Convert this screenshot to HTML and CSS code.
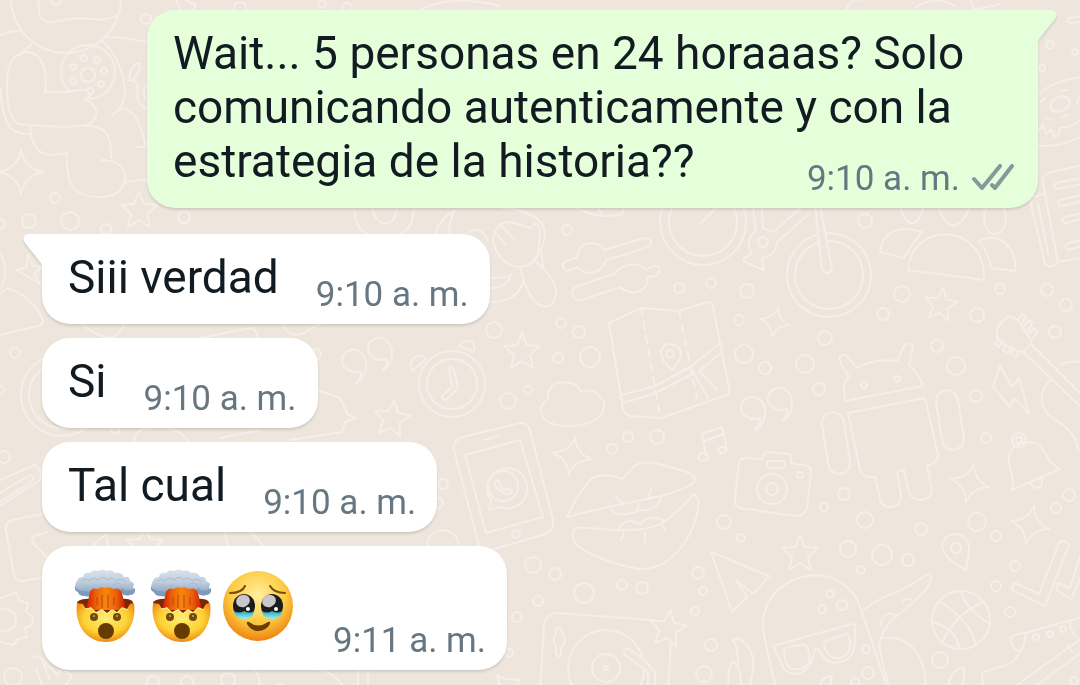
FILE: index.html
```html
<!DOCTYPE html>
<html lang="es">
<head>
  <meta charset="UTF-8">
  <meta name="viewport" content="width=device-width, initial-scale=1.0">
  <title>Chat</title>
  <link rel="stylesheet" href="styles.css">
</head>
<body>
  <!-- Doodle wallpaper -->
  <svg class="wallpaper" viewBox="0 0 1080 685" preserveAspectRatio="xMinYMin slice" aria-hidden="true">
    <defs>
      <path id="star" d="M0 -18 L5 -6 L18 -5 L8 4 L11 17 L0 10 L-11 17 L-8 4 L-18 -5 L-5 -6 Z"/>
      <path id="spark" d="M0 -22 Q3 -4 22 0 Q3 4 0 22 Q-3 4 -22 0 Q-3 -4 0 -22 Z"/>
      <path id="quote" d="M3 20 Q9 14 8 8 C-2 12 -12 4 -11 -3 C-10 -12 0 -16 7 -11 C17 -3 14 14 3 20 Z"/>
    </defs>

    <!-- monkey with a disc -->
    <circle cx="66" cy="-2" r="55"/>
    <circle cx="56" cy="0" r="5"/>
    <path d="M39 0 C37 17 42 23 53 22 C70 18 80 17 92 19 C105 21 118 17 120 12 M0 35 Q10 31 20 31 M106 37 Q125 37 150 43"/>
    <circle cx="88" cy="72" r="27"/>
    <circle cx="88" cy="75" r="7"/>
    <circle cx="84" cy="58" r="3"/><circle cx="97" cy="60" r="3"/><circle cx="104" cy="71" r="3"/><circle cx="101" cy="84" r="3"/>
    <circle cx="73" cy="67" r="3"/><circle cx="73" cy="81" r="3"/><circle cx="90" cy="91" r="3"/>
    <path class="filled" d="M45 92 C48 70 42 52 26 52 C12 54 7 65 7 85 C7 105 10 122 20 124 C40 126 60 128 80 126 C96 126 100 112 93 105 Q90 101 84 100 L90 96 Q88 88 80 90 L66 92 Z"/>
    <path d="M32 44 L20 55 M0 88 C2 105 3 115 8 124 C12 132 22 134 30 134 M101 40 C120 55 127 85 124 98 C122 108 118 110 113 115 Q120 106 128 110 C138 116 142 130 146 147 H138"/>
    <path d="M30 126 C31 145 38 155 52 155 L67 153 C66 170 68 185 78 192 C92 200 122 200 125 180 C126 165 115 160 101 160 M85 126 C105 125 112 135 111 158 M125 182 L150 179"/>
    <path d="M130 80 Q128 66 140 63 Q140 72 133 80 Z M128 80 Q138 78 138 92 Q134 102 148 110 M150 82 Q140 88 146 100"/>
    <path d="M176 0 L180 8 L176 16 L186 11 M186 0 L196 5 L192 12"/>
    <circle cx="240" cy="8" r="6"/>
    <path d="M420 10 Q450 -6 500 6 M846 10 Q852 -4 862 0 M915 8 Q935 -6 955 6 M970 0 L974 10 L1000 4"/>

    <!-- donut and notebook on the right edge -->
    <path d="M1038 94 Q1056 80 1082 77 M1038 146 Q1062 147 1082 136 M1038 132 L1043 124 L1046 134 L1051 129 L1055 137 Q1060 136 1060 127 Q1070 130 1082 118"/>
    <ellipse cx="1060" cy="104" rx="10" ry="7" transform="rotate(-25 1060 104)"/>
    <path d="M1061 90 h6 M1041 102 l4 -4 M1062 117 l6 -2 M1047 119 l3 1 M1078 104 q-2 -4 2 -6"/>
    <path d="M1082 165 L1049 173 Q1041 176 1043 184 L1058 262 Q1052 270 1045 264 L1030 200 Q1030 197 1044 194 M1038 204 L1048 253 M1058 262 L1082 258 M1082 178 L1056 183 Q1052 187 1057 189 L1082 184 M1082 195 L1060 200 Q1055 204 1062 206 L1082 201 M1082 213 L1065 217 Q1059 221 1066 223 L1082 219 M1082 240 L1068 243 Q1062 247 1069 250 L1082 246"/>
    <path d="M1082 16 L1069 18 Q1065 21 1070 23 L1082 22"/>

    <!-- left edge -->
    <use href="#spark" x="21" y="172"/>
    <use href="#star" x="139" y="210"/>
    <path d="M0 252 Q6 262 5 275 Q4 284 0 288 M16 270 L26 267 L28 255 L33 266 L42 267 L34 274 L40 284 L30 278 Z M0 294 L7 288 C28 294 40 312 43 320 Q44 324 38 326 L0 335"/>
    <circle cx="62" cy="395" r="41"/><circle cx="62" cy="395" r="33"/>
    <path d="M80 322 Q95 337 112 338 Q120 335 125 322 M200 338 L250 328 Q257 328 258 340 M280 320 Q288 340 305 333 Q318 320 340 322"/>
    <path d="M134 442 Q134 430 148 428 Q180 424 190 445 M220 438 L260 430 M318 390 L340 398 L348 415 L356 418 L345 422 L342 432 L290 440"/>
    <path d="M0 480 L34 465 Q44 470 40 480 L0 506 M0 493 L30 475 Q36 478 30 483 L0 502"/>
    <path d="M42 514 L12 520 Q5 522 6 530 L14 575 Q17 583 24 581 L44 577 M48 532 L34 536 Q31 538 33 543 L50 560 M90 548 L106 534 L108 548 M225 532 L228 548 M250 532 Q260 540 264 548"/>
    <use href="#star" x="145" y="545"/>
    <path d="M0 598 L10 595 L16 592 L20 601 L28 603 L26 612 L33 616 L32 625 L25 628 L27 637 L18 639 L13 645 L0 642"/>
    <circle cx="5" cy="620" r="11"/>
    <path d="M34 658 Q38 653 42 660 L50 680 M42 660 L58 675 L62 668 L72 676 L66 685 M36 668 L42 685"/>
    <path d="M255 671 Q262 678 258 690 M268 690 Q280 679 292 690 M320 670 Q335 672 345 690 M358 670 V690 M368 670 V690"/>
    <path d="M500 685 L497 675 L505 679 L520 680 L514 690"/>

    <!-- hidden behind the first messages -->
    <path d="M355 212 Q356 232 372 236 Q400 244 412 222 L414 208 M372 208 Q376 224 386 223 Q396 222 397 208"/>
    <path d="M434 236 Q440 218 455 210 M455 210 Q447 225 450 236 M500 208 Q518 208 530 215 Q548 222 544 240 L541 250 L543 266 M470 232 Q480 225 488 240"/>
    <path d="M493 240 Q496 222 510 222 L530 228 L536 223 L540 228 L538 255 Q530 270 512 266 Q496 258 493 240 Z M500 224 L515 240 M494 231 L505 244 M520 268 C524 285 532 303 542 306 Q556 308 556 290 C554 276 540 266 534 260 M524 278 Q520 302 490 302 M490 278 Q508 278 511 274 Q508 288 490 288"/>
    <path d="M577 208 Q600 220 622 214 L624 208 M598 208 L602 215"/>

    <!-- spoons -->
    <path d="M604 250 L644 238 Q652 238 651 244 Q650 248 606 260 Q602 272 590 273 Q580 272 578 267 L568 271 Q562 270 563 264 Q565 260 577 258 Q578 244 590 243 Q600 243 604 250 Z"/>
    <path d="M616 273 L576 287 Q570 290 573 297 Q576 301 582 300 L620 287 Q630 296 642 290 Q648 285 648 277 L656 276 Q661 273 659 267 Q654 264 646 270 Q640 263 628 265 Q618 268 616 273 Z"/>

    <!-- bicycle -->
    <circle cx="703" cy="222" r="43"/><circle cx="703" cy="222" r="34"/>
    <circle cx="829" cy="275" r="42"/><circle cx="829" cy="275" r="34"/>
    <path class="filled" d="M815 205 L822 268 Q827 278 832 269 L820 205"/>
    <path d="M700 224 L718 206 M753 208 L756 230 Q744 242 752 254 L744 258 Q742 262 750 264 L764 270 L762 258 Q776 256 777 242 L808 215 M762 208 L763 228 L774 232 L800 208"/>
    <circle cx="763" cy="242" r="5"/>

    <!-- paw flower -->
    <path d="M880 252 C883 230 900 225 922 232 Q912 245 904 258 Z M908 270 C912 220 986 222 984 280 Z M979 241 C1000 230 1018 250 1015 271 L991 268 Q990 255 979 241 Z"/>
    <path d="M901 208 Q904 222 912 223 Q920 222 923 208 M939 208 Q944 224 953 226 Q965 222 969 208"/>
    <ellipse cx="995" cy="218" rx="11" ry="16"/>

    <!-- quotes, alarm clock, cloud -->
    <use href="#quote" x="353" y="363"/>
    <use href="#quote" x="379" y="351"/>
    <use href="#quote" x="752" y="410"/>
    <use href="#quote" x="779" y="401"/>
    <circle cx="452" cy="384" r="33"/><circle cx="452" cy="384" r="25"/>
    <path d="M449 368 Q452 366 454 370 L458 388 L446 400 Q442 400 442 396 L452 387 Z M412 371 Q408 360 417 356 Q424 355 426 359 Z M459 346 Q464 339 472 342 Q476 345 474 352 Z"/>
    <use href="#star" x="522" y="351"/>
    <use href="#star" x="392" y="418" transform="rotate(8 392 418)"/>
    <path d="M549 398 C545 390 550 393 551 388 Q556 380 570 383 Q578 384 581 392 Q592 388 598 395 C610 404 603 420 585 424 Q560 430 545 420 Q535 408 549 398 Z"/>

    <!-- folded map -->
    <path d="M609 323 L641 308 L679 311 L707 302 Q712 302 713 307 L729 388 Q731 394 724 396 L661 418 L630 416 Q624 414 623 409 Z M622 395 L655 386 L690 367 L722 342 M623 403 L656 393 L692 374 M690 367 L708 398 M699 371 L717 390 M699 371 L722 352"/>
    <path stroke-dasharray="8 6" d="M641 308 L660 416 M679 311 L697 398"/>
    <path d="M672 370 Q660 360 661 351 Q664 343 671 344 Q681 346 681 355 Q679 362 672 370 Z"/>
    <circle cx="670" cy="354" r="4"/>
    <use href="#spark" transform="translate(775 322) rotate(12) scale(.7)"/>

    <!-- phone -->
    <path d="M480 550 L454 450 Q452 441 462 437 L520 423 Q527 422 530 430 L553 520 Q554 530 546 534 L494 549 M484 440 L498 436"/>
    <path d="M465 455 L520 440 L543 517 L486 533 Z"/>
    <circle cx="516" cy="534" r="4"/>
    <path d="M489 510 L491 500 A20 20 0 1 1 500 507 Z"/>
    <circle cx="503" cy="486" r="15"/>
    <path d="M495 482 Q498 478 500 484 Q500 488 506 490 Q512 488 512 492 Q506 497 500 490 Q494 487 495 482 Z"/>
    <use href="#spark" transform="translate(572 456) rotate(10) scale(.9)"/>

    <!-- note, lips -->
    <path d="M706 455 L702 434 L722 427 L727 449 M704 441 L723 434"/>
    <ellipse cx="703" cy="457" rx="5" ry="4"/><ellipse cx="722" cy="450" rx="4" ry="3"/>
    <path d="M567 517 C575 500 585 485 592 478 Q605 472 622 479 Q628 474 634 466 Q644 460 660 464 L690 473 Q698 478 692 484 C672 498 620 502 567 517 Z"/>
    <path d="M577 528 C585 525 640 538 664 522 Q680 510 694 494 Q700 498 698 510 C692 540 670 570 640 569 C615 565 590 556 577 545 Q568 534 577 528 Z"/>
    <path d="M611 508 Q614 518 636 512 L639 504 M639 510 Q656 512 661 498 M618 530 Q625 516 640 524 Q652 512 665 522 M615 496 L624 504 M651 489 L648 499 M624 532 L621 541 M645 532 V542 M661 523 L666 532"/>
    <path d="M427 546 Q428 531 443 530 Q458 532 459 546"/>

    <!-- turntable -->
    <path d="M540 690 L544 625 Q546 614 556 613 L652 620 M671 642 L668 690"/>
    <circle cx="606" cy="668" r="38"/><circle cx="606" cy="668" r="14"/><circle cx="606" cy="668" r="2"/>
    <path d="M556 632 Q559 622 562 632 L565 640 Q563 646 561 648 V655 Q558 658 556 654 V647 Q552 642 556 632 Z"/>
    <path class="filled" d="M625 655 Q622 648 629 649 L644 660 L655 672 V690 H648 V672 Z"/>
    <use class="filled" href="#star" x="668" y="628" transform="rotate(8 668 628)"/>
    <path d="M711 552 L769 576 L753 594 L736 580 L747 597 L732 612 Z"/>

    <!-- camera -->
    <path d="M739 462 Q740 458 746 458 L762 459 Q763 452 769 452 L788 454 Q792 455 791 463 L807 466 Q812 467 811 473 L807 508 Q804 516 796 516 L740 508 Q734 506 735 499 Z"/>
    <circle cx="772" cy="489" r="15"/><circle cx="772" cy="489" r="6"/><circle cx="800" cy="475" r="3"/>
    <rect x="767" y="461" width="18" height="7" rx="3"/>

    <!-- robot -->
    <path d="M845 401 C843 385 844 382 849 376 Q838 362 840 356 Q846 352 850 360 L857 368 Q875 358 897 361 L904 346 Q910 340 913 347 L909 365 Q920 375 923 386 Z"/>
    <circle cx="864" cy="385" r="3"/><circle cx="897" cy="379" r="3"/>
    <path d="M848 413 L925 398 L938 455 Q938 463 927 466 L932 490 Q931 500 920 500 Q911 500 908 490 L904 470 L897 472 L901 495 Q902 506 890 507 Q880 506 880 498 L875 477 Q862 478 860 470 Z"/>
    <rect x="825" y="412" width="22" height="62" rx="11" transform="rotate(-9 836 443)"/>
    <rect x="939" y="390" width="22" height="60" rx="11" transform="rotate(-9 950 420)"/>
    <use href="#star" transform="translate(941 304) rotate(8) scale(.9)"/>

    <!-- guitar, lightning, bell -->
    <path d="M997 330 Q999 322 1010 316 L1018 320 L1032 342 L1024 352 Q1008 350 997 338 Z M1032 345 L1082 395 M1023 352 L1082 408 M1060 365 Q1070 360 1082 362 M1051 380 C1038 390 1038 410 1055 420 Q1075 430 1078 450"/>
    <path d="M1018 320 l4 -6 l4 3 l-4 6 M1024 326 l5 -6 l4 3 l-5 7 M1029 333 l5 -5 l4 3 l-5 7 M999 338 l-4 6 l4 3 l4 -6 M1006 344 l-3 6 l5 3 l3 -6 M1013 348 l-2 6 l5 3 l3 -6"/>
    <path d="M1000 366 L993 387 L1010 407 L1014 398 L1029 414 L1019 378 L1012 387 Z"/>
    <circle cx="1019" cy="440" r="7"/><circle cx="1019" cy="440" r="3"/>
    <path d="M1012 490 C1016 475 1004 462 1011 450 Q1020 440 1036 443 C1048 450 1045 462 1060 469 Z M1031 484 Q1038 492 1042 484 L1042 477"/>
    <use href="#spark" transform="translate(970 483) rotate(12) scale(.9)"/>
    <use href="#spark" transform="translate(1030 525) rotate(12) scale(.9)"/>
    <use href="#star" x="800" y="553"/>
    <path d="M966 570 C955 565 942 555 942 546 Q944 534 956 534 Q970 536 969 552 Z"/>
    <circle cx="956" cy="548" r="5"/>

    <!-- face with glasses, bird, ball -->
    <path d="M776 690 C768 650 758 625 766 608 C780 570 842 560 860 606 L888 690"/>
    <path d="M773 646 L852 624 Q857 624 855 632 Q856 655 846 660 Q828 668 820 652 Q816 645 814 652 Q812 670 797 674 Q784 674 780 660 Z M784 650 Q786 646 806 645 Q812 655 808 664 Q800 672 790 668 Q784 662 784 650 Z M824 642 L846 634 Q852 636 849 652 Q840 662 830 656 Q824 650 824 642 Z"/>
    <path d="M863 610 C880 595 905 592 923 577 Q931 571 931 578 C930 592 905 608 890 622 Q878 636 880 650 Q884 670 890 690 M882 638 C910 634 926 655 926 690 M881 625 Q880 616 890 613 L896 615 M902 603 Q904 597 911 600"/>
    <circle cx="961" cy="620" r="29"/>
    <path d="M940 602 Q970 620 976 645 M982 602 Q955 615 943 641 M961 591 Q966 610 990 624 M932 622 Q955 628 959 647"/>
    <path d="M732 642 Q734 636 742 640 C756 652 756 668 748 690 M734 640 Q738 650 738 662 M728 690 Q728 660 734 662 Q742 668 741 690 M820 685 Q822 676 832 676 L830 685 M947 690 Q950 670 964 667 Q966 680 960 690"/>

    <!-- double tick and shoe -->
    <path d="M1015 583 L1039 594 L1059 543 Q1064 538 1069 545 L1045 606 L1012 590 Q1012 584 1015 583 Z M1082 550 L1070 588 L1058 583 L1056 590 L1071 599 L1082 575"/>
    <path d="M1082 617 L1025 633 Q1010 634 1010 640 Q1012 648 1020 652 Q1014 664 1000 667 L984 672 Q980 674 984 690 M1025 633 Q1026 645 1020 652 M1082 638 L1010 690 M1082 652 L1030 690 M1070 622 Q1070 632 1077 637 M1067 645 L1072 652"/>
    <circle cx="1036" cy="637" r="3"/><circle cx="1050" cy="634" r="3"/><circle cx="1063" cy="629" r="3"/>

    <!-- loose bubbles -->
    <circle cx="55" cy="198" r="5"/><circle cx="29" cy="221" r="7"/><circle cx="70" cy="221" r="9"/><circle cx="106" cy="229" r="5"/>
    <circle cx="146" cy="19" r="5"/><circle cx="184" cy="217" r="6"/><circle cx="322" cy="4" r="4"/><circle cx="347" cy="8" r="5"/>
    <circle cx="0" cy="224" r="5"/><circle cx="15" cy="353" r="5"/><circle cx="0" cy="390" r="4"/><circle cx="4" cy="457" r="6"/><circle cx="115" cy="430" r="4"/>
    <circle cx="1050" cy="45" r="4"/><circle cx="1075" cy="52" r="3"/><circle cx="1042" cy="68" r="3"/><circle cx="865" cy="221" r="7"/>
    <circle cx="567" cy="230" r="5"/><circle cx="679" cy="288" r="5"/><circle cx="494" cy="330" r="8"/><circle cx="561" cy="323" r="5"/>
    <circle cx="579" cy="332" r="6"/><circle cx="558" cy="358" r="5"/><circle cx="590" cy="357" r="10"/><circle cx="508" cy="401" r="8"/>
    <circle cx="528" cy="390" r="4"/><circle cx="628" cy="437" r="5"/><circle cx="657" cy="437" r="7"/><circle cx="612" cy="449" r="5"/>
    <circle cx="711" cy="283" r="5"/><circle cx="747" cy="291" r="7"/><circle cx="739" cy="320" r="5"/><circle cx="744" cy="354" r="9"/>
    <circle cx="765" cy="368" r="6"/><circle cx="825" cy="338" r="7"/><circle cx="805" cy="364" r="9"/><circle cx="819" cy="389" r="6"/>
    <circle cx="883" cy="314" r="6"/><circle cx="902" cy="294" r="8"/><circle cx="1000" cy="289" r="5"/><circle cx="977" cy="315" r="7"/>
    <circle cx="937" cy="346" r="6"/><circle cx="956" cy="366" r="9"/><circle cx="976" cy="396" r="6"/><circle cx="1047" cy="290" r="6"/>
    <circle cx="1066" cy="305" r="6"/><circle cx="1055" cy="332" r="6"/><circle cx="986" cy="438" r="5"/><circle cx="316" cy="354" r="5"/>
    <circle cx="443" cy="484" r="5"/><circle cx="438" cy="503" r="5"/><circle cx="533" cy="565" r="8"/><circle cx="555" cy="574" r="6"/>
    <circle cx="584" cy="593" r="10"/><circle cx="622" cy="585" r="5"/><circle cx="642" cy="588" r="6"/><circle cx="538" cy="601" r="5"/>
    <circle cx="517" cy="617" r="5"/><circle cx="509" cy="653" r="4"/><circle cx="698" cy="573" r="6"/><circle cx="703" cy="591" r="4"/>
    <circle cx="695" cy="611" r="4"/><circle cx="711" cy="645" r="6"/><circle cx="704" cy="674" r="8"/><circle cx="724" cy="522" r="7"/>
    <circle cx="741" cy="538" r="4"/><circle cx="844" cy="494" r="6"/><circle cx="824" cy="507" r="4"/><circle cx="865" cy="520" r="8"/>
    <circle cx="848" cy="549" r="8"/><circle cx="882" cy="555" r="10"/><circle cx="908" cy="560" r="6"/><circle cx="861" cy="570" r="4"/>
    <circle cx="921" cy="529" r="6"/><circle cx="977" cy="522" r="9"/><circle cx="996" cy="536" r="5"/><circle cx="1015" cy="566" r="5"/>
    <circle cx="996" cy="586" r="5"/><circle cx="1010" cy="612" r="5"/><circle cx="1056" cy="508" r="5"/><circle cx="1069" cy="495" r="6"/>
    <circle cx="830" cy="594" r="4"/><circle cx="842" cy="605" r="5"/><circle cx="822" cy="609" r="4"/><circle cx="866" cy="649" r="4"/>
    <circle cx="868" cy="673" r="6"/><circle cx="855" cy="682" r="4"/><circle cx="940" cy="660" r="8"/><circle cx="1074" cy="681" r="4"/>
    <circle cx="13" cy="677" r="9"/><circle cx="153" cy="682" r="6"/><circle cx="187" cy="682" r="6"/><circle cx="228" cy="680" r="7"/>
  </svg>

  <!-- Shared emoji artwork -->
  <svg class="sprites" aria-hidden="true">
    <defs>
      <linearGradient id="smoke" x1="0" y1="0" x2="0" y2="1">
        <stop offset="0" stop-color="#d9e2ec"/>
        <stop offset=".5" stop-color="#bfcddc"/>
        <stop offset="1" stop-color="#809cbd"/>
      </linearGradient>
      <linearGradient id="lava" x1="0" y1="0" x2="1" y2="0">
        <stop offset="0" stop-color="#c61a08"/>
        <stop offset=".25" stop-color="#ee6208"/>
        <stop offset=".5" stop-color="#f9850c"/>
        <stop offset=".75" stop-color="#ee6208"/>
        <stop offset="1" stop-color="#c61a08"/>
      </linearGradient>
      <radialGradient id="skin" cx=".5" cy=".4" r=".62">
        <stop offset="0" stop-color="#ffee74"/>
        <stop offset=".6" stop-color="#fdd235"/>
        <stop offset="1" stop-color="#ee8210"/>
      </radialGradient>
      <radialGradient id="face" cx=".5" cy=".35" r=".65">
        <stop offset="0" stop-color="#ffefa0"/>
        <stop offset=".6" stop-color="#fdcb42"/>
        <stop offset="1" stop-color="#ee8210"/>
      </radialGradient>
      <linearGradient id="tear" x1="0" y1="0" x2="0" y2="1">
        <stop offset="0" stop-color="#2aa7b8"/>
        <stop offset="1" stop-color="#9af0f5"/>
      </linearGradient>
    </defs>
    <symbol id="mind-blown" viewBox="0 0 76 76">
      <path fill="#7c2605" d="M9 34 Q14 30 24 31 H52 Q62 30 65 34 L62 46 H14 Z"/>
      <path fill="url(#smoke)" d="M10 22 Q5 18 9 13 Q10 9 15 9 Q16 4 22 5 Q25 1 30 3 Q35 0 39 3 Q44 1 47 5 Q54 4 56 9 Q62 8 62 13 Q68 15 65 19 Q68 26 61 27 Q56 28 53 24 L24 24 Q22 29 17 27 Q10 29 10 22 Z"/>
      <path fill="#7f9bbc" d="M7 18 Q10 24 17 23 Q22 25 25 21 L24 28 Q20 29 17 28 Q11 28 10 24 Q6 23 7 18 Z M53 20 Q60 25 67 20 Q68 27 62 27 Q56 29 53 24 Z"/>
      <path fill="none" stroke="#a9bbd0" d="M13 14 q4 -5 8 -1 q4 -5 9 -1 q5 -5 9 0 q6 -4 9 1 q6 -4 10 1 M13 20 q5 -4 9 0 q5 -5 9 -1 M45 17 q5 -4 9 1"/>
      <path fill="url(#lava)" d="M22 24 Q24 19 30 21 Q33 18 37 20 Q41 18 45 21 Q52 19 54 25 L58 42 H18 Z"/>
      <path fill="none" stroke="#b8460a" d="M29 29 V37 M34 27 V40 M40 27 V40 M46 29 V37"/>
      <path fill="url(#skin)" d="M9 35 L15 36 L18 41 L23 39 L28 44 L34 41 L39 45 L44 41 L49 44 L54 39 L59 41 L62 36 L66 35 C69 56 57 74 38 74 C18 74 6 56 9 35 Z"/>
      <path fill="none" stroke="#fff1b4" d="M17 41 L23 40 L28 45 L34 42 L39 46 L44 42 L49 45 L54 40 L60 42"/>
      <circle fill="#73490e" cx="26" cy="49" r="4"/>
      <circle fill="#73490e" cx="49" cy="49" r="4"/>
      <circle fill="#c9a668" cx="26" cy="48" r="1"/>
      <circle fill="#c9a668" cx="49" cy="48" r="1"/>
      <circle fill="#643c00" cx="38" cy="63" r="8"/>
    </symbol>
    <symbol id="holding-tears" viewBox="0 0 76 76">
      <circle fill="url(#face)" cx="38" cy="38" r="35"/>
      <ellipse fill="#1c1c1e" cx="24" cy="38" rx="11" ry="12"/>
      <ellipse fill="#1c1c1e" cx="52" cy="38" rx="11" ry="12"/>
      <ellipse fill="#c8c8ca" cx="23" cy="33" rx="7" ry="6" transform="rotate(-20 23 33)"/>
      <ellipse fill="#c8c8ca" cx="49" cy="33" rx="7" ry="6" transform="rotate(-20 49 33)"/>
      <path fill="url(#tear)" d="M14 43 Q19 46 24 43 Q30 46 34 43 Q33 51 24 51 Q15 51 14 43 Z M42 43 Q47 46 52 43 Q58 46 62 43 Q61 51 52 51 Q43 51 42 43 Z"/>
      <circle fill="#fff" cx="28" cy="41" r="2"/>
      <circle fill="#fff" cx="56" cy="41" r="2"/>
      <path fill="none" stroke="#7a4a06" stroke-width="2" stroke-linecap="round" d="M10 25 Q22 25 25 18 M50 18 Q54 25 65 25"/>
      <path fill="#6a3e02" d="M27 56 Q26 53 29 54 Q38 61 48 54 Q51 53 50 56 Q46 63 38 63 Q31 63 27 56 Z"/>
    </symbol>
  </svg>

  <main class="chat">
    <div class="message out first">
      <svg class="tail" viewBox="0 0 20 32" aria-hidden="true"><path d="M0 0 H14 Q21 2 17 9 L1 29 L0 32 Z"/></svg>
      <p class="text">Wait... 5 personas en 24 horaaas? Solo comunicando autenticamente y con la estrategia de la historia??
        <span class="meta">
          <time datetime="09:10">9:10 a. m.</time>
          <svg class="ticks" viewBox="0 0 42 30" role="img" aria-label="Entregado"><path d="M2 15 L10 24 L28 2 M20 21 L23 24 L40 2"/></svg>
        </span>
      </p>
    </div>

    <div class="message in first">
      <svg class="tail" viewBox="0 0 20 32" aria-hidden="true"><path d="M20 0 H6 Q-1 2 3 9 L19 29 L20 32 Z"/></svg>
      <p class="text">Siii verdad</p>
      <div class="meta"><time datetime="09:10">9:10 a. m.</time></div>
    </div>

    <div class="message in">
      <p class="text">Si</p>
      <div class="meta"><time datetime="09:10">9:10 a. m.</time></div>
    </div>

    <div class="message in">
      <p class="text">Tal cual</p>
      <div class="meta"><time datetime="09:10">9:10 a. m.</time></div>
    </div>

    <div class="message in">
      <p class="text emojis">
        <svg class="emoji" role="img" aria-label="🤯"><use href="#mind-blown"/></svg>
        <svg class="emoji" role="img" aria-label="🤯"><use href="#mind-blown"/></svg>
        <svg class="emoji" role="img" aria-label="🥹"><use href="#holding-tears"/></svg>
      </p>
      <div class="meta"><time datetime="09:11">9:11 a. m.</time></div>
    </div>
  </main>
</body>
</html>
```
FILE: styles.css
```css
* {
  box-sizing: border-box;
}

body {
  margin: 0;
  min-height: 100vh;
  background-color: #eee6dd;
  color: #111b21;
  font-family: Roboto, Arial, sans-serif;
}

.wallpaper {
  position: fixed;
  inset: 0;
  width: 100%;
  height: 100%;
  fill: none;
  stroke: #f5efe8;
  stroke-width: 2;
  stroke-linecap: round;
  stroke-linejoin: round;
}

.wallpaper .filled {
  fill: #eee6dd;
}

.sprites {
  position: absolute;
  width: 0;
  height: 0;
}

.chat {
  position: relative;
  display: flex;
  flex-direction: column;
  align-items: flex-start;
  gap: 14px;
  padding: 10px 42px 14px;
}

.message {
  position: relative;
  display: flex;
  gap: 37px;
  padding: 16px 21px 9px 26px;
  border-radius: 28px;
  filter: drop-shadow(0 2px 1px rgba(0, 0, 0, 0.12));
}

.in {
  background-color: #ffffff;
}

.in.first {
  border-top-left-radius: 0;
}

.out {
  display: block;
  align-self: flex-end;
  max-width: 900px;
  margin-left: 105px;
  margin-bottom: 12px;
  padding-right: 24px;
  background-color: #e5ffdb;
  border-top-right-radius: 0;
}

.text {
  margin: 0 0 11px;
  font-size: 46px;
  line-height: 54px;
}

.meta {
  display: flex;
  align-items: center;
  align-self: end;
  gap: 12px;
  color: #667781;
  font-size: 35px;
  line-height: 41px;
  white-space: nowrap;
}

/* the time shares the last line of a long message */
.out .meta {
  float: right;
  margin: 24px 0 -11px;
}

.ticks {
  width: 42px;
  height: 30px;
  fill: none;
  stroke: #87989a;
  stroke-width: 4;
  stroke-linecap: round;
  stroke-linejoin: round;
}

.tail {
  position: absolute;
  top: 0;
  width: 20px;
  height: 32px;
}

.out .tail {
  left: 100%;
  fill: #e5ffdb;
}

.in .tail {
  right: 100%;
  fill: #ffffff;
}

.emojis {
  display: flex;
  align-items: center;
  height: 88px;
}

.emoji {
  width: 76px;
  height: 76px;
}

@media (max-width: 700px) {
  .out {
    margin-left: 0;
  }
}
```
